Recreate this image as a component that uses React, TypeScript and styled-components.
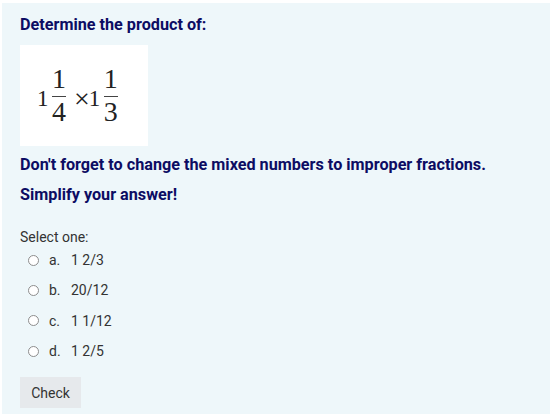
import React from 'react';
import styled, { createGlobalStyle } from 'styled-components';

const GlobalStyle = createGlobalStyle`
    body {
        margin: 0;
        background: #ffffff;
        font-family: Roboto, "Liberation Sans", sans-serif;
    }
`;

const Panel = styled.div`
    margin: 3px 0 0 2px;
    padding: 7px 18px 6px 18px;
    background: #eef7fa;
    min-height: 398px;
    box-sizing: border-box;
`;

const Prompt = styled.p`
    margin: 0;
    font-size: 16.2px;
    line-height: 30px;
    font-weight: 700;
    color: #0c0c63;
`;

const Figure = styled.div`
    width: 128px;
    height: 101px;
    margin: 5px 0 4px 0;
    background: #ffffff;
    display: flex;
    align-items: center;
    padding-left: 17px;
    box-sizing: border-box;
    font-family: "Liberation Serif", "Times New Roman", serif;
    color: #222222;
`;

const Whole = styled.span`
    font-size: 23px;
    line-height: 23px;
    margin-top: 5px;
`;

const Frac = styled.span`
    display: inline-flex;
    flex-direction: column;
    align-items: center;
    margin-left: 3.5px;
    font-size: 28px;
    line-height: 28px;
`;

const Bar = styled.span`
    width: 14px;
    height: 1px;
    background: #444;
    margin: 3px 0 1px 0;
`;

const Times = styled.span`
    font-size: 28px;
    line-height: 28px;
    margin: 6px -1px 0 8px;
`;

const Answer = styled.div`
    margin-top: 20px;
    color: #333333;
    font-size: 14px;
`;

const Label = styled.div`
    line-height: 15px;
`;

const Option = styled.label`
    display: flex;
    align-items: center;
    height: 30.3px;
    padding-left: 8px;
`;

const Radio = styled.span`
    width: 11px;
    height: 11px;
    border-radius: 50%;
    border: 1px solid #8d8d8d;
    background: #ffffff;
    margin-right: 10px;
    box-sizing: border-box;
`;

const Letter = styled.span`
    width: 22px;
`;

const CheckButton = styled.button`
    margin-top: 11px;
    width: 61px;
    height: 31px;
    border: none;
    background: #e6e9ec;
    color: #333333;
    font-family: Roboto, "Liberation Sans", sans-serif;
    font-size: 14px;
    padding: 0;
`;

const options = [
    { key: 'a.', text: '1 2/3' },
    { key: 'b.', text: '20/12' },
    { key: 'c.', text: '1 1/12' },
    { key: 'd.', text: '1 2/5' },
];

function Fraction({ num, den }: { num: string; den: string }) {
    return (
        <Frac>
            <span>{num}</span>
            <Bar />
            <span>{den}</span>
        </Frac>
    );
}

export default function App() {
    return (
        <>
            <GlobalStyle />
            <Panel>
                <Prompt>Determine the product of:</Prompt>
                <Figure>
                    <Whole>1</Whole>
                    <Fraction num="1" den="4" />
                    <Times>×</Times>
                    <Whole>1</Whole>
                    <Fraction num="1" den="3" />
                </Figure>
                <Prompt>Don't forget to change the mixed numbers to improper fractions.</Prompt>
                <Prompt>Simplify your answer!</Prompt>
                <Answer>
                    <Label>Select one:</Label>
                    {options.map(o => (
                        <Option key={o.key}>
                            <Radio />
                            <Letter>{o.key}</Letter>
                            <span>{o.text}</span>
                        </Option>
                    ))}
                    <CheckButton>Check</CheckButton>
                </Answer>
            </Panel>
        </>
    );
}
